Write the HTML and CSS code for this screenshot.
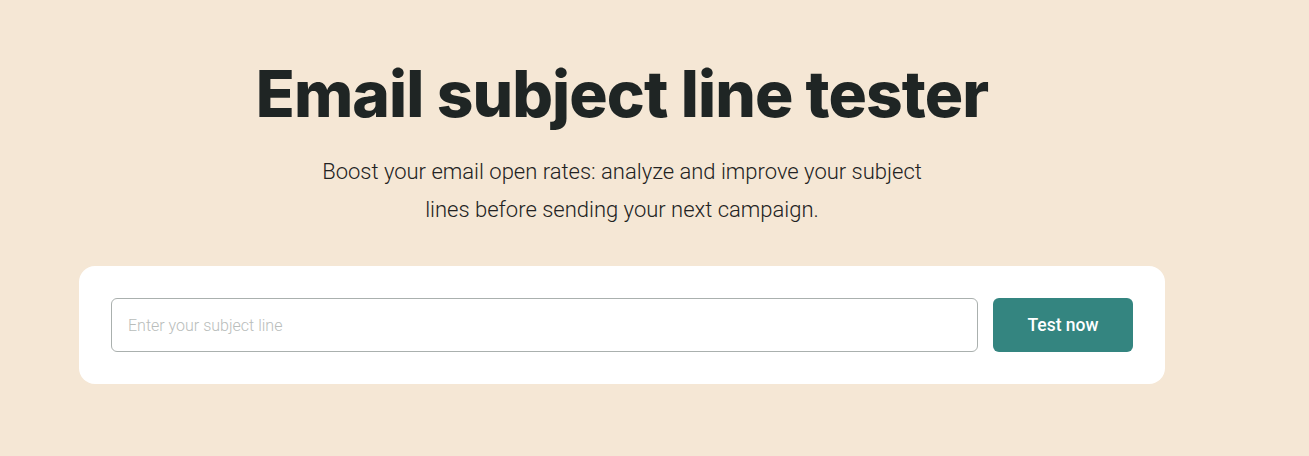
FILE: index.html
```html
<!DOCTYPE html>
<html lang="en">
  <head>
    <meta charset="UTF-8" />
    <meta name="viewport" content="width=device-width, initial-scale=1.0" />
    <title>Email subject line tester</title>
    <link rel="stylesheet" href="styles.css">
  </head>
  <body>
    <main class="tester">
      <h1 class="tester-title">Email subject line tester</h1>
      <p class="tester-lead">
        Boost your email open rates: analyze and improve your subject<br />
        lines before sending your next campaign.
      </p>

      <form class="tester-card" onsubmit="return false">
        <input
          type="text"
          class="subject-input"
          placeholder="Enter your subject line"
        />
        <button type="submit" class="test-button">Test now</button>
      </form>
    </main>
  </body>
</html>
```

FILE: styles.css
```css
body {
  margin: 0;
  padding: 0;
  background-color: #f5e7d5;
  font-family: Roboto, "Liberation Sans", sans-serif;
  color: #1f2524;
}
.tester {
  width: 1086px;
  margin: 0 0 0 79px;
  padding-top: 54px;
  text-align: center;
}
.tester-title {
  margin: 0;
  font-family: Inter, "Liberation Sans", sans-serif;
  font-weight: 800;
  font-size: 64px;
  line-height: 80px;
  letter-spacing: -0.9px;
  color: #1f2524;
}
.tester-lead {
  margin: 19px 0 0;
  font-size: 22px;
  font-weight: 300;
  line-height: 38px;
  color: #222;
}
.tester-card {
  display: flex;
  gap: 15px;
  margin-top: 37px;
  padding: 32px;
  background-color: #ffffff;
  border-radius: 16px;
}
.subject-input {
  flex: 1;
  height: 54px;
  padding: 0 16px;
  box-sizing: border-box;
  border: 1px solid #aab0ae;
  border-radius: 6px;
  font-family: Roboto, "Liberation Sans", sans-serif;
  font-size: 16px;
  font-weight: 300;
  color: #222;
}
.subject-input::placeholder {
  color: #b9bdbb;
}
.test-button {
  width: 140px;
  height: 54px;
  border: none;
  border-radius: 6px;
  background-color: #348580;
  color: #ffffff;
  font-family: Roboto, "Liberation Sans", sans-serif;
  font-size: 17.5px;
  font-weight: 500;
  cursor: pointer;
}
```
